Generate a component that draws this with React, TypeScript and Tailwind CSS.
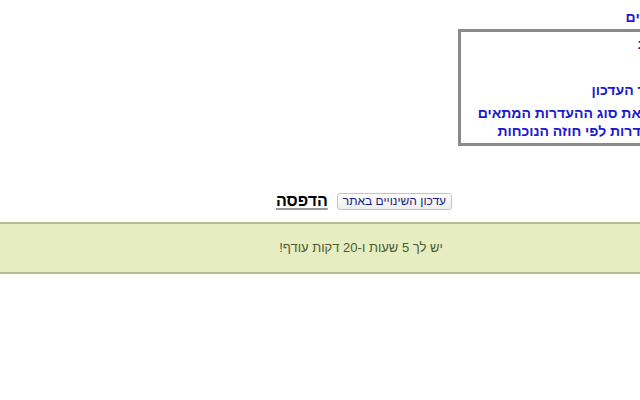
import React from 'react'

export default function App() {
  return (
    <div className="w-[640px] h-[400px] overflow-hidden bg-white font-['Liberation_Sans',Arial,sans-serif]">
      <div dir="rtl" className="w-[722px]">
        <div className="h-[29px] pr-[5px] pt-[9px] text-[14px] leading-[16px] font-bold text-[#1a1acc]">
          רשימת עובדים
        </div>

        <div className="ml-[458px] mr-[8px] h-[117px] border-[3px] border-[#8a8a8a] pr-[8px] text-[14px] leading-[18px] font-bold text-[#1a1acc]">
          <div className="pt-[3px]">נא שים לב</div>
          <div className="mt-[28px]">ודאו לאחר העדכון</div>
          <div className="mt-[5px]">יש לבחור את סוג ההעדרות המתאים</div>
          <div>ולעדכן העדרות לפי חוזה הנוכחות</div>
        </div>

        <div className="mt-[47px] ml-[6px] flex justify-center items-center gap-[9px] h-[16px]">
          <button className="h-[17px] px-[5px] rounded-[3px] border border-[#c4c4c4] bg-gradient-to-b from-white to-[#ededed] text-[12px] leading-[14px] text-[#1a1a80]">
            עדכון השינויים באתר
          </button>
          <span className="text-[16px] leading-[16px] font-bold text-black underline decoration-[#9a9a9a] decoration-2 underline-offset-[2px]">
            הדפסה
          </span>
        </div>

        <div className="mt-[13px] h-[52px] border-y-2 border-[#b4bd8f] bg-[#e5edc1] flex items-center justify-center text-[13px] text-[#4f5a33]">
          יש לך 5 שעות ו-20 דקות עודף!
        </div>
      </div>
    </div>
  )
}
